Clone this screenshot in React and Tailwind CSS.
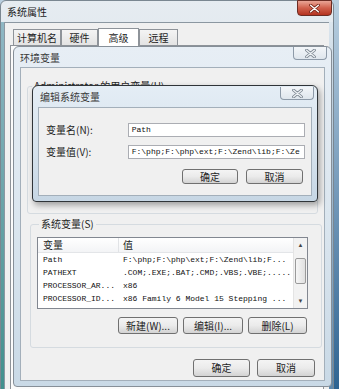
import React from "react";

const cjk = "font-['Noto_Sans_CJK_SC',sans-serif]";
const mono = "font-['Liberation_Mono',monospace]";

function XGlyph({ light = "#f4f6f8", dark = "#5b6470" }) {
  return (
    <svg width="11" height="9" viewBox="0 0 11 9">
      <path d="M1.6 1.2 L9.4 7.8 M9.4 1.2 L1.6 7.8" stroke={dark} strokeWidth="3" strokeLinecap="round" />
      <path d="M1.6 1.2 L9.4 7.8 M9.4 1.2 L1.6 7.8" stroke={light} strokeWidth="1.3" strokeLinecap="round" />
    </svg>
  );
}

function GhostClose() {
  return (
    <div className="flex items-center justify-center w-[34px] h-[13px] border border-[#8d9aa8] border-t-0 rounded-b-[4px] bg-gradient-to-b from-[#f3f6f9] to-[#dfe6ed]">
      <XGlyph light="#eef2f5" dark="#7d8792" />
    </div>
  );
}

function Btn({ children, className = "" }) {
  return (
    <div
      className={`flex items-center justify-center border border-[#707070] rounded-[3px] bg-gradient-to-b from-[#f4f4f4] via-[#ebebeb] to-[#d3d3d3] text-[10px] leading-none text-[#1e1e1e] ${cjk} ${className}`}
    >
      {children}
    </div>
  );
}

function Tab({ children, active, className = "" }) {
  return (
    <div
      className={`flex items-center justify-center border border-[#8e9399] border-b-0 text-[10px] leading-none text-[#1e1e1e] ${cjk} ${
        active ? "h-[18px] bg-white -mb-px z-10" : "h-[16px] bg-gradient-to-b from-[#f4f4f4] to-[#e3e3e3]"
      } ${className}`}
    >
      {children}
    </div>
  );
}

const rows = [
  ["Path", "F:\\php;F:\\php\\ext;F:\\Zend\\lib;F..."],
  ["PATHEXT", ".COM;.EXE;.BAT;.CMD;.VBS;.VBE;....."],
  ["PROCESSOR_AR...", "x86"],
  ["PROCESSOR_ID...", "x86 Family 6 Model 15 Stepping ..."],
];

export default function App() {
  return (
    <div className="relative w-[339px] h-[389px] overflow-hidden bg-gradient-to-b from-[#b9cfe0] to-[#2f6592]">
      {/* 系统属性 */}
      <div className="absolute left-0 top-0 w-[334px] h-[400px] flex flex-col rounded-t-[6px] border border-[#7a8791] bg-gradient-to-b from-[#e6ecf1] via-[#d3dee7] to-[#b4c9d8]">
        <div className="relative h-[21px] flex items-center pl-[6px]">
          <span className={`text-[10px] text-[#1a1a1a] ${cjk}`}>系统属性</span>
          <div className="absolute right-[1px] top-[-1px] flex items-center justify-center w-[35px] h-[16px] border border-[#6b2d24] rounded-b-[4px] bg-gradient-to-b from-[#e9a596] via-[#d0604c] to-[#b4321f]">
            <XGlyph light="#ffffff" dark="#7a2a1e" />
          </div>
        </div>
        <div className="flex flex-1">
          <div className="w-[3px] bg-gradient-to-b from-[#8fb7c4] to-[#3e8f8c]" />
          <div className="flex-1 border-l border-t border-[#8b97a1] bg-[#f0f0f0] pt-[5px] pl-[7px] pr-[5px] flex flex-col">
            <div className="flex items-end pl-[1px] h-[17px]">
              <Tab className="w-[48px]">计算机名</Tab>
              <Tab className="w-[37px]">硬件</Tab>
              <Tab active className="w-[41px]">高级</Tab>
              <Tab className="w-[39px]">远程</Tab>
            </div>
            <div className="flex-1 -ml-[2px] border border-[#8e9399] bg-[#fbfbfb]" />
          </div>
          <div className="w-[4px] bg-gradient-to-b from-[#dce6ee] to-[#5b87ab]" />
        </div>
      </div>

      {/* 环境变量 */}
      <div className="absolute left-[13px] top-[46px] w-[319px] h-[341px] flex flex-col rounded-t-[6px] rounded-b-[4px] border border-[#868f98] bg-gradient-to-b from-[#e7eef5] via-[#dbe6ef] to-[#c9d9e6]">
        <div className="relative h-[20px] flex items-center pl-[6px]">
          <span className={`text-[10px] text-[#3a3a3a] ${cjk}`}>环境变量</span>
          <div className="absolute right-[4px] top-0">
            <GhostClose />
          </div>
        </div>
        <div className="flex-1 mx-[6px] mb-[5px] border border-[#a3afba] bg-[#f0f0f0] flex flex-col">
          <div className="h-[151px] pt-[13px] px-[6px]">
            <fieldset className="h-[133px] border border-[#d5dbe0] rounded-[3px]">
              <legend className={`ml-[4px] px-[2px] text-[10px] leading-none text-[#1e1e1e] ${cjk}`}>
                Administrator 的用户变量(U)
              </legend>
            </fieldset>
          </div>
          <fieldset className="ml-[9px] w-[292px] h-[129px] border border-[#d5dbe0] rounded-[3px] px-[6px]">
            <legend className={`ml-[2px] px-[2px] text-[10px] leading-none text-[#1e1e1e] ${cjk}`}>
              系统变量(S)
            </legend>
            <div className="mt-[8px] h-[72px] w-[271px] border border-[#828790] bg-white flex">
              <div className="flex-1 flex flex-col">
                <div className="h-[15px] flex items-center border-b border-[#e3e5e8] bg-gradient-to-b from-white to-[#f3f4f6]">
                  <div className={`w-[81px] h-full flex items-center pl-[5px] border-r border-[#e1e3e6] text-[10px] leading-none text-[#1e1e1e] ${cjk}`}>
                    变量
                  </div>
                  <div className={`pl-[4px] text-[10px] leading-none text-[#1e1e1e] ${cjk}`}>值</div>
                </div>
                {rows.map(([k, v]) => (
                  <div key={k} className={`h-[13px] flex items-center text-[8px] leading-none text-[#111] whitespace-nowrap ${mono}`}>
                    <div className="w-[81px] pl-[5px]">{k}</div>
                    <div className="pl-[4px]">{v}</div>
                  </div>
                ))}
              </div>
              <div className="w-[14px] flex flex-col bg-[#f2f2f2] border-l border-[#e4e4e4]">
                <div className="h-[14px] flex items-center justify-center text-[6px] text-[#444]">▲</div>
                <div className="mx-[1px] mt-[6px] h-[26px] border border-[#9a9a9a] rounded-[2px] bg-gradient-to-r from-[#f6f6f6] to-[#e0e0e0]" />
                <div className="flex-1" />
                <div className="h-[14px] flex items-center justify-center text-[6px] text-[#444]">▼</div>
              </div>
            </div>
            <div className="mt-[8px] flex justify-end gap-[5px] pr-[8px]">
              <Btn className="w-[60px] h-[17px]">新建(W)...</Btn>
              <Btn className="w-[60px] h-[17px]">编辑(I)...</Btn>
              <Btn className="w-[59px] h-[17px]">删除(L)</Btn>
            </div>
          </fieldset>
          <div className="mt-[11px] flex justify-end gap-[7px] pr-[9px]">
            <Btn className="w-[57px] h-[18px]">确定</Btn>
            <Btn className="w-[58px] h-[18px]">取消</Btn>
          </div>
        </div>
      </div>

      {/* 编辑系统变量 */}
      <div className="absolute left-[32px] top-[85px] w-[286px] h-[117px] flex flex-col rounded-t-[6px] rounded-b-[4px] border border-[#2f3438] bg-gradient-to-b from-[#e4edf5] via-[#d8e4ee] to-[#c6d6e4] shadow-[2px_3px_6px_rgba(0,0,0,0.35)]">
        <div className="relative h-[21px] flex items-center pl-[7px]">
          <span className={`text-[10px] text-[#3a3a3a] ${cjk}`}>编辑系统变量</span>
          <div className="absolute right-[3px] top-[1px]">
            <GhostClose />
          </div>
        </div>
        <div className="flex-1 mx-[5px] mb-[5px] border border-[#a3afba] bg-[#f0f0f0] flex flex-col pt-[15px] pl-[7px] pr-[6px]">
          <div className="flex items-center h-[14px]">
            <div className={`w-[82px] text-[10px] leading-none text-[#1e1e1e] ${cjk}`}>变量名(N):</div>
            <div className={`w-[178px] h-[14px] border border-[#abadb3] bg-white flex items-center pl-[3px] text-[8px] text-[#111] ${mono}`}>
              Path
            </div>
          </div>
          <div className="flex items-center h-[14px] mt-[8px]">
            <div className={`w-[82px] text-[10px] leading-none text-[#1e1e1e] ${cjk}`}>变量值(V):</div>
            <div className={`w-[178px] h-[14px] border border-[#abadb3] bg-white flex items-center pl-[3px] whitespace-nowrap text-[8px] text-[#111] ${mono}`}>
              F:\php;F:\php\ext;F:\Zend\lib;F:\Ze
            </div>
          </div>
          <div className="mt-[10px] flex justify-end gap-[8px] pr-[2px]">
            <Btn className="w-[56px] h-[15px]">确定</Btn>
            <Btn className="w-[57px] h-[15px]">取消</Btn>
          </div>
        </div>
      </div>
    </div>
  );
}
